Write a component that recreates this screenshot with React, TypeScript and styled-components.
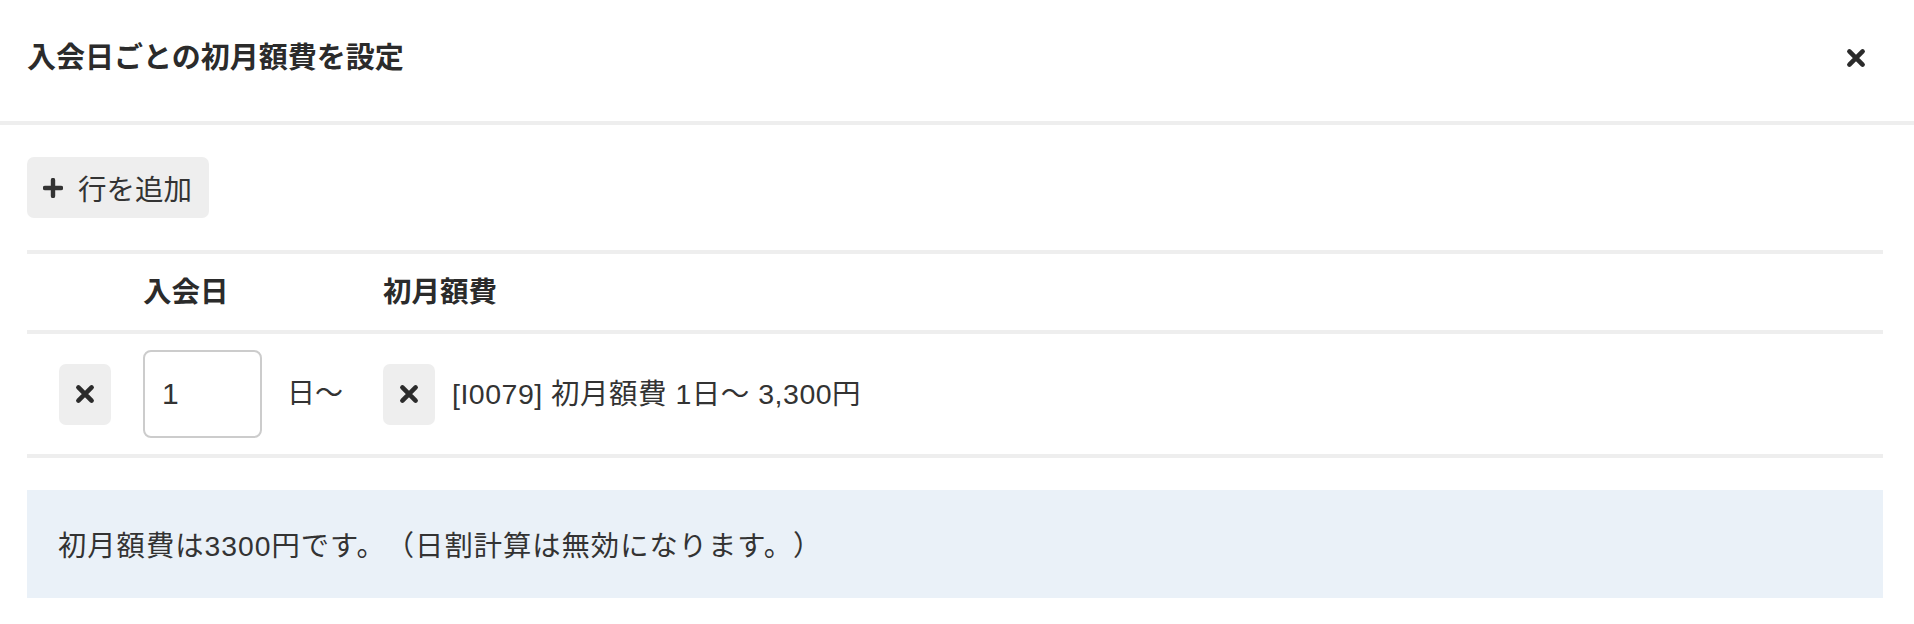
import React from "react";
import styled, { createGlobalStyle } from "styled-components";

const GlobalStyle = createGlobalStyle`
  html, body {
    margin: 0;
    padding: 0;
    background: #ffffff;
  }
  body {
    font-family: "Liberation Sans", "Noto Sans CJK JP", sans-serif;
    color: #333333;
    text-spacing-trim: space-all;
  }
  * { box-sizing: border-box; }
`;

const Dialog = styled.div`
  width: 1914px;
  height: 624px;
  background: #ffffff;
  display: flex;
  flex-direction: column;
`;

const Header = styled.div`
  height: 125px;
  border-bottom: 4px solid #eeeeee;
  display: flex;
  align-items: center;
  justify-content: space-between;
  padding: 0 48px 6px 27px;
`;

const Title = styled.h1`
  margin: 0;
  font-size: 29px;
  font-weight: 700;
  line-height: 36px;
  color: #2b2b2b;
`;

const CloseButton = styled.button`
  border: 0;
  background: transparent;
  padding: 0;
  width: 20px;
  height: 20px;
  display: flex;
  align-items: center;
  justify-content: center;
  color: #2b2b2b;
  cursor: pointer;
`;

const Body = styled.div`
  padding: 32px 31px 0 27px;
  display: flex;
  flex-direction: column;
`;

const AddButton = styled.button`
  align-self: flex-start;
  height: 61px;
  padding: 0 17px 0 16px;
  border: 0;
  border-radius: 7px;
  background: #eeeeee;
  display: flex;
  align-items: center;
  gap: 15px;
  font-family: inherit;
  font-size: 28.5px;
  color: #333333;
  cursor: pointer;
`;

const Table = styled.div`
  margin-top: 32px;
  border-top: 4px solid #eeeeee;
`;

const Row = styled.div<{ $height: number }>`
  display: grid;
  grid-template-columns: 116px 240px 1fr;
  align-items: center;
  height: ${(p) => p.$height}px;
  border-bottom: 4px solid #eeeeee;
  box-sizing: content-box;
`;

const HeadCell = styled.div`
  font-size: 28.5px;
  font-weight: 700;
  line-height: 36px;
  color: #2b2b2b;
`;

const Cell = styled.div<{ $pad?: number }>`
  display: flex;
  align-items: center;
  padding-left: ${(p) => p.$pad ?? 0}px;
  font-size: 28px;
  line-height: 36px;
`;

const IconButton = styled.button`
  width: 52px;
  height: 61px;
  border: 0;
  border-radius: 7px;
  background: #eeeeee;
  display: flex;
  align-items: center;
  justify-content: center;
  padding: 0;
  color: #2b2b2b;
  cursor: pointer;
  flex-shrink: 0;
`;

const DayInput = styled.input`
  width: 119px;
  height: 88px;
  border: 2px solid #cccccc;
  border-radius: 8px;
  padding: 0 0 0 17px;
  font-family: inherit;
  font-size: 30px;
  color: #333333;
  outline: none;
`;

const Suffix = styled.span`
  margin-left: 25px;
`;

const ItemLabel = styled.span`
  margin-left: 17px;
  color: #333333;
  font-size: 28.5px;
  letter-spacing: 0.5px;
`;

const Notice = styled.div`
  margin-top: 32px;
  height: 108px;
  background: #eaf1f8;
  display: flex;
  align-items: center;
  padding: 4px 0 0 31px;
  font-size: 28.3px;
  letter-spacing: 1px;
  line-height: 36px;
  color: #333333;
`;

const XIcon = ({ size = 20 }: { size?: number }) => (
  <svg width={size} height={size} viewBox="0 0 20 20" aria-hidden="true">
    <path
      d="M3.4 3.4 L16.6 16.6 M16.6 3.4 L3.4 16.6"
      stroke="currentColor"
      strokeWidth="4.6"
      strokeLinecap="round"
      fill="none"
    />
  </svg>
);

const PlusIcon = () => (
  <svg width="20" height="20" viewBox="0 0 20 20" aria-hidden="true">
    <path
      d="M10 2 L10 18 M2 10 L18 10"
      stroke="currentColor"
      strokeWidth="4.4"
      strokeLinecap="round"
      fill="none"
    />
  </svg>
);

export default function App() {
  return (
    <>
      <GlobalStyle />
      <Dialog>
        <Header>
          <Title>入会日ごとの初月額費を設定</Title>
          <CloseButton aria-label="閉じる">
            <XIcon size={20} />
          </CloseButton>
        </Header>
        <Body>
          <AddButton>
            <PlusIcon />
            <span>行を追加</span>
          </AddButton>
          <Table>
            <Row $height={76}>
              <div />
              <HeadCell>入会日</HeadCell>
              <HeadCell>初月額費</HeadCell>
            </Row>
            <Row $height={120}>
              <Cell $pad={32}>
                <IconButton aria-label="削除">
                  <XIcon size={20} />
                </IconButton>
              </Cell>
              <Cell>
                <DayInput defaultValue="1" />
                <Suffix>日〜</Suffix>
              </Cell>
              <Cell>
                <IconButton aria-label="クリア">
                  <XIcon size={20} />
                </IconButton>
                <ItemLabel>[I0079] 初月額費 1日〜 3,300円</ItemLabel>
              </Cell>
            </Row>
          </Table>
          <Notice>初月額費は3300円です。（日割計算は無効になります。）</Notice>
        </Body>
      </Dialog>
    </>
  );
}
